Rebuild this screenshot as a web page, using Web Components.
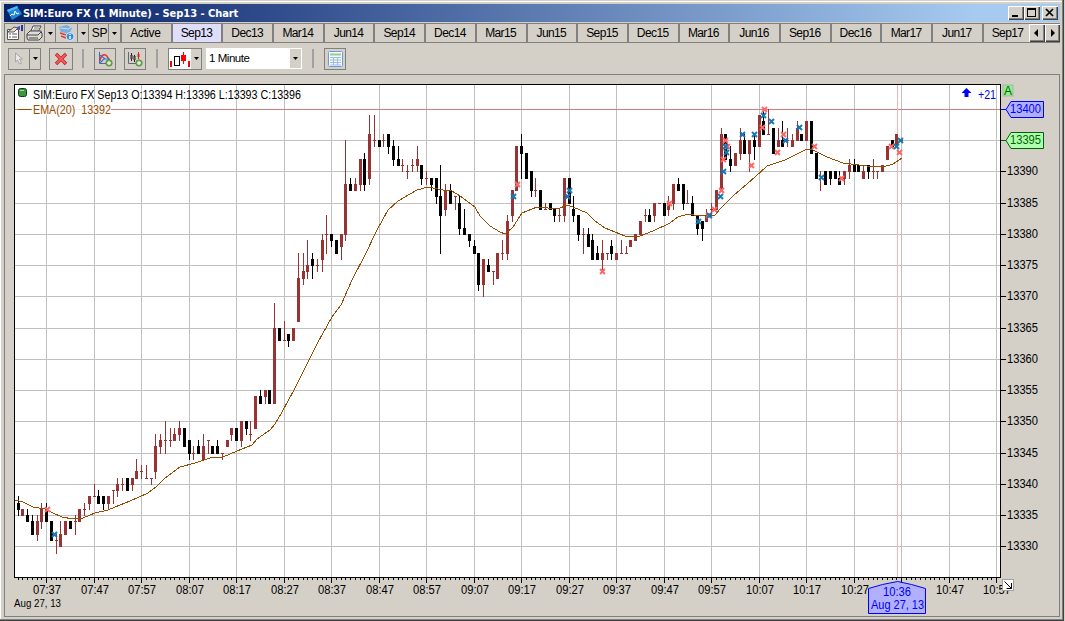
<!DOCTYPE html>
<html lang="en">
<head>
<meta charset="utf-8">
<title>SIM:Euro FX (1 Minute) - Sep13 - Chart</title>
<style>
    html, body { margin: 0; height: 100%; overflow: hidden; background: #d4d0c8; }
    body { font: 12px "Liberation Sans", Arial, sans-serif; color: #000; }
</style>
</head>
<body>
<chart-window></chart-window>

<script>
class ChartWindow extends HTMLElement {
    constructor() {
        super();
        this.attachShadow({mode : "open"});
    }

    static get styles() {
        return `
            :host {
                display: flex;
                flex-direction: column;
                box-sizing: border-box;
                width: 1065px;
                height: 621px;
                padding: 4px 5px 4px 4px;
                background: #d4d0c8;
                box-shadow: inset -1px 0 #d4d0c8, inset -2px -1px #404040, inset -3px -2px #808080, inset 0 1px #d4d0c8, inset 1px 2px #fff;
            }
            .panel {
                flex: 1;
                box-sizing: border-box;
                border: 1px solid #808080;
            }
        `;
    }

    connectedCallback() {
        this.shadowRoot.innerHTML = `
            <style>${ChartWindow.styles}</style>
            <title-bar>SIM:Euro FX (1 Minute) - Sep13 - Chart</title-bar>
            <contract-tabs></contract-tabs>
            <tool-bar></tool-bar>
            <section class="panel"><price-chart></price-chart></section>
        `;
    }
}

class TitleBar extends HTMLElement {
    constructor() {
        super();
        this.attachShadow({mode : "open"});
    }

    static get styles() {
        return `
            :host {
                display: flex;
                align-items: center;
                height: 18px;
                margin-bottom: 1px;
                padding: 0 2px 0 3px;
                background: linear-gradient(90deg, #0a246a 0%, #0a246a 4%, #a6caf0 92%);
                color: #fff;
            }
            .logo { flex: none; margin-right: 1px; }
            .title {
                flex: 1;
                font: bold 11px "DejaVu Sans Condensed", "DejaVu Sans", sans-serif;
                font-stretch: condensed;
                letter-spacing: -0.04px;
                white-space: pre;
            }
            .btn {
                box-sizing: border-box;
                width: 16px;
                height: 14px;
                background: #d4d0c8;
                box-shadow: inset 1px 1px #fff, inset -1px -1px #404040, inset -2px -2px #808080;
            }
            .btn.close { margin-left: 2px; }
            svg { display: block; }
        `;
    }

    connectedCallback() {
        this.shadowRoot.innerHTML = `
            <style>${TitleBar.styles}</style>
            <svg class="logo" width="15" height="15" viewBox="0 0 15 15">
                <path d="M0 4 10 0 15 8 5 14Z" fill="#1d86d8"/>
                <path d="M0 4 10 0 11 2 1 6Z" fill="#59b8f4"/>
                <path d="M3 10 5 8 7 9 8 5 10 8 12 7" fill="none" stroke="#fff"/>
            </svg>
            <span class="title"><slot></slot></span>
            <div class="btn"><svg width="16" height="14"><path d="M4 10h6" stroke="#000" stroke-width="2"/></svg></div>
            <div class="btn"><svg width="16" height="14" shape-rendering="crispEdges"><path d="M3 2h9v2H3z"/><path d="M3.5 3v7.5h8V3" fill="none" stroke="#000"/></svg></div>
            <div class="btn close"><svg width="16" height="14"><path d="M4 3l7 7M11 3l-7 7" stroke="#000" stroke-width="1.7"/></svg></div>
        `;
    }
}

class ContractTabs extends HTMLElement {
    constructor() {
        super();
        this.attachShadow({mode : "open"});
        this.contracts = ["Active", "Sep13", "Dec13", "Mar14", "Jun14", "Sep14", "Dec14", "Mar15", "Jun15",
            "Sep15", "Dec15", "Mar16", "Jun16", "Sep16", "Dec16", "Mar17", "Jun17", "Sep17"];
        this.selected = "Sep13";
    }

    static get styles() {
        return `
            :host {
                display: flex;
                box-sizing: border-box;
                height: 20px;
                border-top: 1px solid #808080;
                border-bottom: 1px solid #808080;
                border-left: 1px solid #808080;
                overflow: hidden;
            }
            .cell {
                flex: none;
                box-sizing: border-box;
                display: flex;
                align-items: center;
                justify-content: center;
                border-right: 1px solid #808080;
                letter-spacing: -0.3px;
            }
            .cell.symbol { padding-left: 2px; }
            .tabs { flex: 1; display: flex; overflow: hidden; }
            .tab {
                flex: none;
                box-sizing: border-box;
                width: 50.7px;
                padding-right: 1px;
                border-left: 2px solid #808080;
                text-align: center;
                line-height: 18px;
                letter-spacing: -0.6px;
            }
            .tab:first-child { letter-spacing: -0.4px; padding-right: 2px; }
            .tab.on { background: #dedefa; }
            .scroll {
                flex: none;
                width: 15.5px;
                height: 18px;
                background: #d4d0c8;
                box-shadow: inset 1px 1px #fff, inset -1px -1px #404040, inset -2px -2px #808080;
            }
            svg { display: block; }
        `;
    }

    connectedCallback() {
        const drop = `<svg width="5" height="3"><path d="M0 0h5L2.5 3z"/></svg>`;
        const tabs = this.contracts.map(c => `<div class="tab${c === this.selected ? " on" : ""}">${c}</div>`).join("");
        this.shadowRoot.innerHTML = `
            <style>${ContractTabs.styles}</style>
            <div class="cell" style="width:20px">
                <svg width="17" height="16" viewBox="0 0 17 16">
                    <path d="M1.5 4.5h11v10h-11z" fill="#fff" stroke="#555"/>
                    <path d="M3 9h2M6 9h5M3 12h2M6 12h5" stroke="#555"/>
                    <path d="M2 7 8 2l4 1-4 4z" fill="#e8ddc8" stroke="#333" stroke-width=".8"/>
                    <path d="M11 2l3-1v4l-3-1z" fill="#4c50b8"/><path d="M15 0h2v6h-2z" fill="#30309a"/>
                </svg>
            </div>
            <div class="cell" style="width:20px">
                <svg width="17" height="16" viewBox="0 0 17 16">
                    <path d="M5 6 7 1h8l-3 6z" fill="#fff" stroke="#444"/><path d="M8 3h5M7 5h5" stroke="#777"/>
                    <path d="M1 9 4 6h11l1 3v3l-3 3H2l-1-2z" fill="#ddd" stroke="#444"/>
                    <path d="M1 10h11l3-3M3 13h9" fill="none" stroke="#444"/><path d="M9 12h2" stroke="#cc0"/>
                </svg>
            </div>
            <div class="cell" style="width:11px">${drop}</div>
            <div class="cell" style="width:22px">
                <svg width="17" height="16" viewBox="0 0 17 16">
                    <path d="M1 2 9 0l5 3-3 7-8-2z" fill="#79aede"/><path d="M2 3l9 1 2-2" fill="none" stroke="#c5dff5"/>
                    <path d="M2 7l6 1v6l-5-2z" fill="#e8c8c0"/><path d="M2 8l6 2M3 11l5 2" stroke="#c84838" stroke-width="1.5"/>
                    <circle cx="12" cy="11.5" r="4" fill="#3a8ad8" stroke="#d8ecff"/><path d="M12 8.7v1.3M12 11v3" stroke="#fff" stroke-width="1.5"/>
                </svg>
            </div>
            <div class="cell" style="width:11px">${drop}</div>
            <div class="cell symbol" style="width:20px">SP</div>
            <div class="cell" style="width:11px;border:0">${drop}</div>
            <div class="tabs">${tabs}</div>
            <div class="scroll"><svg width="15" height="18"><path d="M9 5v8L5 9z"/></svg></div>
            <div class="scroll"><svg width="15" height="18"><path d="M6 5v8l4-4z"/></svg></div>
        `;
    }
}

class ToolBar extends HTMLElement {
    constructor() {
        super();
        this.attachShadow({mode : "open"});
    }

    static get styles() {
        return `
            :host {
                display: flex;
                align-items: center;
                height: 31px;
                padding-left: 4px;
            }
            .btn {
                box-sizing: border-box;
                flex: none;
                display: flex;
                height: 22px;
                border: 1px solid #808080;
                align-items: center;
                justify-content: center;
            }
            .part { display: flex; align-items: center; justify-content: center; height: 20px; }
            .part + .part { border-left: 1px solid #808080; }
            .sep { flex: none; width: 2px; height: 19px; background: #a0a0a0; }
            .combo {
                display: flex;
                box-sizing: border-box;
                width: 96px;
                height: 21px;
                border: 1px solid #fff;
                background: #fff;
                line-height: 19px;
                letter-spacing: -0.45px;
            }
            .combo span { flex: 1; padding-left: 2px; font-size: 11.5px; }
            .combo div { width: 11px; background: #d4d0c8; display: flex; align-items: center; justify-content: center; }
            svg { display: block; }
        `;
    }

    connectedCallback() {
        const drop = `<svg width="5" height="3"><path d="M0 0h5L2.5 3z"/></svg>`;
        const plus = `<circle cx="12" cy="12" r="3.2" fill="#7cb45c" stroke="#48883a" stroke-width=".8"/><path d="M12 10v4M10 12h4" stroke="#fff"/>`;
        this.shadowRoot.innerHTML = `
            <style>${ToolBar.styles}</style>
            <div class="btn" style="width:33px">
                <div class="part" style="width:20px"><svg width="10" height="13"><path d="M1.5 1v9l2-2 2 4 2-1-2-4h3z" fill="#e8e8e8" stroke="#999" stroke-width=".8"/></svg></div>
                <div class="part" style="flex:1">${drop}</div>
            </div>
            <div class="btn" style="width:24px;margin-left:8px">
                <svg width="14" height="14"><path d="M2 2l10 10M12 2l-10 10" stroke="#b32424" stroke-width="3.4"/><path d="M2.5 2.5l9 9M11.5 2.5l-9 9" stroke="#f45c5c" stroke-width="2"/></svg>
            </div>
            <div class="sep" style="margin-left:9px"></div>
            <div class="btn" style="width:22px;margin-left:10px">
                <svg width="16" height="16" viewBox="0 0 16 16"><path d="M2.5 1v11.5H11" fill="none" stroke="#4a68a8"/><path d="M3 10c1-7 6-9 9-1" fill="none" stroke="#e03838" stroke-width="1.6"/><path d="M3 4l5 4 5 0M3 12l5-5" fill="none" stroke="#3878d0" stroke-width="1.2"/>${plus}</svg>
            </div>
            <div class="btn" style="width:22px;margin-left:8px">
                <svg width="16" height="16" viewBox="0 0 16 16"><path d="M1.5 1v11.5H10" fill="none" stroke="#667"/><path d="M4.5 2v8M7.5 4v7" stroke="#222"/><path d="M4 4h1v4h-1zM7 5h1v4h-1z" fill="#fff" stroke="#222"/><path d="M11.5 1v7" stroke="#d22"/><path d="M10.500 3h2v3h-2z" fill="#d22"/>${plus}</svg>
            </div>
            <div class="sep" style="margin-left:10px"></div>
            <div class="btn" style="width:34px;margin-left:10px">
                <div class="part" style="width:22px;background:#fff">
                    <svg width="20" height="18" shape-rendering="crispEdges"><path d="M0 11h2v6H0zM11 5h5v6h-5zM13 2h1v12h-1zM18 11h2v6h-2z" fill="#f00"/><path d="M4.500 6.500h5v9h-5z" fill="#fff" stroke="#000"/></svg>
                </div>
                <div class="part" style="flex:1;border:0">${drop}</div>
            </div>
            <div class="combo" style="margin-left:4px"><span>1 Minute</span><div>${drop}</div></div>
            <div class="sep" style="margin-left:10px"></div>
            <div class="btn" style="width:22px;margin-left:10px">
                <svg width="15" height="16" viewBox="0 0 15 16"><rect x=".5" y=".5" width="14" height="15" rx="1" fill="#f4faff" stroke="#6f9cd0"/><path d="M2 3.500h11" stroke="#98cc88" stroke-width="2"/><path d="M2 6.500h11M2 9h11M2 11.500h11M2 14h11M5.500 6v8M9.500 6v8" stroke="#98bce4"/></svg>
            </div>
        `;
    }
}

// One bar per minute from 07:31: open high low close, less 13000
const BARS = `337 338 335 336,335 336 335 336,335 336 334 334,334 335 332 332,332 335 331 334,334 337 333 336,
336 337 334 334,334 334 331 331,331 332 329 331,330 334 330 332,332 334 332 334,334 334 333 333,334 335 332 334,
334 336 334 336,336 337 335 336,337 338 336 338,338 340 338 338,338 339 337 337,338 338 336 337,337 338 336 338,
339 339 337 339,339 341 338 340,340 341 339 340,341 341 339 339,340 341 339 341,341 344 341 342,342 343 341 342,
341 343 341 341,341 341 340 341,342 348 341 346,346 348 345 347,347 350 345 347,347 349 346 347,347 349 347 348,
348 350 347 349,349 349 346 346,347 347 344 345,345 346 344 345,346 347 345 345,344 348 344 346,347 347 345 347,
346 346 345 345,346 347 345 345,345 345 344 345,346 347 346 347,348 349 347 349,349 349 347 347,347 350 346 350,
350 350 348 349,348 350 347 348,349 354 349 354,354 355 353 353,354 355 353 355,355 355 353 353,353 369 353 365,
365 365 363 363,363 366 363 363,364 364 362 363,363 365 363 365,366 377 366 373,373 377 372 374,374 379 373 375,
376 377 373 375,375 376 374 375,376 380 374 379,380 383 377 380,380 380 378 379,379 379 377 377,378 380 376 380,
380 395 379 388,388 389 387 387,387 389 387 388,388 392 387 392,392 393 387 388,389 399 388 396,395 399 394 395,
395 395 394 394,395 396 394 395,396 396 393 394,394 395 391 392,392 394 391 391,391 392 390 391,390 391 389 390,
391 392 390 391,391 394 390 392,391 391 388 389,389 390 388 389,389 389 387 388,389 389 385 386,386 391 377 383,
384 388 383 387,387 388 385 385,386 386 384 386,385 386 380 381,381 384 380 380,380 380 378 379,378 379 377 377,
377 377 371 372,372 376 370 376,375 376 374 374,374 374 372 374,373 377 373 377,377 379 376 377,377 383 376 382,
383 387 382 387,387 394 387 394,394 396 389 393,393 393 389 389,390 390 386 387,387 389 386 387,387 387 384 384,
384 385 384 384,385 385 384 384,384 384 382 383,383 384 382 383,383 389 382 389,389 389 385 385,384 386 382 383,
383 383 379 380,380 381 377 380,380 381 378 378,379 380 376 376,377 378 376 376,376 379 374 377,377 377 376 377,
378 379 376 377,376 377 376 377,377 379 377 377,377 378 377 377,378 379 378 379,379 380 379 380,380 382 380 382,
383 384 382 383,383 384 382 382,383 385 382 385,385 385 385 385,385 385 383 383,384 386 383 385,385 388 384 388,
388 389 387 387,388 388 384 385,385 387 385 385,385 386 383 383,383 383 380 381,382 382 379 381,382 384 382 383,
384 385 383 384,384 387 384 387,387 397 387 396,396 396 392 392,392 394 390 391,391 393 391 393,393 397 392 395,
395 396 393 393,393 395 390 395,395 396 392 394,394 399 394 399,398 400 396 396,396 400 396 396,397 397 393 393,
394 397 394 395,395 398 394 394,395 397 394 395,394 396 394 395,395 398 395 397,396 396 395 395,395 398 395 398,
398 398 393 393,393 393 389 389,389 390 387 389,390 390 388 388,390 390 388 389,390 390 389 389,389 390 388 388,
389 390 388 390,390 392 389 391,391 392 390 390,391 391 390 390,389 391 389 390,391 391 389 390,390 392 389 390,
390 390 389 390,390 391 390 391,392 394 392 394,395 395 394 394,394 396 394 396,395 395 395 395`;

const EMA = "15,500 23,502 33,507 45,509 53,513 62,517 73,519 83,518 95,513 108,510 120,505 130,501 148,493 157,486 164,479 " +
    "180,467 195,463 210,458 223,457 237,451 252,445 257,439 270,430 275,424 282,412 294,390 308,362 318,342 332,317 341,305 " +
    "352,280 365,255 377,230 388,210 398,201 417,190 428,187 443,190 452,191 460,196 475,207 480,216 490,226 500,232 505,234 " +
    "513,227 522,213 537,207 558,209 567,205 573,207 587,213 595,221 605,228 625,236 640,236 653,231 670,223 678,217 688,214 " +
    "700,216 715,215 720,209 733,196 755,177 767,166 785,160 807,149 813,150 827,157 843,163 867,166 883,167 893,164 902,158";

const SELLS = [[47,509],[517,184],[602,271],[669,203],[725,140],[727,146],[723,159],[721,190],[714,209],[708,215],
    [751,165],[764,109],[762,127],[777,152],[783,134],[814,146],[841,178],[891,146],[899,152]];
const BUYS = [[54,534],[513,196],[567,196],[569,190],[698,221],[709,215],[720,196],[723,171],[726,152],[725,146],
    [742,134],[754,134],[763,115],[771,121],[785,140],[799,127],[821,177],[896,146],[900,140]];

class PriceChart extends HTMLElement {
    constructor() {
        super();
        this.attachShadow({mode : "open"});
    }

    static get styles() {
        return `
            :host { display: block; }
            svg { display: block; }
            text { font: 12px "Liberation Sans", Arial, sans-serif; white-space: pre; }
            .crisp { shape-rendering: crispEdges; }
        `;
    }

    // pixel column of a minute, counted from 07:37
    x(minute) {
        return Math.floor(46.5 + minute * 4.75);
    }

    y(price) {
        return Math.round(109 + (400 - price) * 6.25 - 0.1);
    }

    label(x, y, width, text, extra = "") {
        return `<text x="${x}" y="${y}" textLength="${width}" lengthAdjust="spacingAndGlyphs" ${extra}>${text}</text>`;
    }

    grid() {
        let out = "";
        for (let p = 395; p >= 330; p -= 5) {
            out += `<rect x="15" y="${this.y(p)}" width="985" height="1" fill="#c0c0c0"/>`;
        }
        for (let m = 0; m <= 200; m += 10) {
            out += `<rect x="${this.x(m)}" y="85" width="1" height="492" fill="#c0c0c0"/>`;
        }
        return out + `<rect x="15" y="109" width="985" height="1" fill="#cc8080"/><rect x="897" y="85" width="1" height="492" fill="#ffb0b0"/>`;
    }

    bars() {
        return BARS.split(",").map((bar, i) => {
            const [o, h, l, c] = bar.trim().split(" ").map(Number);
            const x = this.x(i - 6);
            const top = this.y(Math.max(o, c));
            const bottom = this.y(Math.min(o, c));
            return `<g fill="${o > c ? "#000" : "#993333"}">
                <rect x="${x}" y="${this.y(h)}" width="1" height="${this.y(l) - this.y(h) + 1}"/>
                <rect x="${x - 1}" y="${top}" width="3" height="${bottom - top + 1}"/>
            </g>`;
        }).join("");
    }

    marks(points, color) {
        const d = points.map(([x, y]) => `M${x - 2} ${y - 2}l5 5m0 -5l-5 5`).join("");
        return `<path d="${d}" fill="none" stroke="${color}" stroke-width="1.9"/>`;
    }

    axes() {
        let out = `<g class="crisp"><path d="M14.500 577.500V84.500H1000.500V577.500Z" fill="none" stroke="#000"/>`;
        for (let m = -6; m <= 200; m++) {
            out += `<rect x="${this.x(m)}" y="578" width="1" height="${m % 10 === 0 ? 5 : 2}"/>`;
        }
        for (let p = 390; p >= 330; p -= 5) {
            out += `<rect x="1001" y="${this.y(p)}" width="5" height="1"/>`;
        }
        out += "</g>";
        for (let p = 390; p >= 330; p -= 5) {
            out += this.label(1007, this.y(p) + 4, 31, "13" + p);
        }
        for (let m = 0; m <= 200; m += 10) {
            const t = 7 * 60 + 37 + m;
            // the cursor flag stands in for this one
            if (m === 180) continue;
            const text = String(Math.floor(t / 60)).padStart(2, "0") + ":" + String(t % 60).padStart(2, "0");
            out += this.label(this.x(m) - 13, 594, 28, text);
        }
        return out + this.label(14, 607, 47, "Aug 27, 13", `style="font-size:11px"`);
    }

    flag(y, text, line, fill) {
        return `<path d="M1001 ${y}.500h5l5 -8h32.500v16h-32.500l-5 -8" fill="${fill}" stroke="${line}"/>` +
            this.label(1010, y + 4, 31, text, `fill="${line}"`);
    }

    connectedCallback() {
        this.shadowRoot.innerHTML = `
            <style>${PriceChart.styles}</style>
            <svg width="1054" height="540" viewBox="5 75 1054 540">
                <rect x="14" y="84" width="987" height="494" fill="#fff"/>
                <g class="crisp">${this.grid()}${this.bars()}</g>
                <polyline class="crisp" points="${EMA}" fill="none" stroke="#964b00"/>
                ${this.marks(SELLS, "#ff6666")}
                ${this.marks(BUYS, "#1478b4")}
                ${this.axes()}

                <rect x="32" y="104" width="79" height="11" fill="#fff" opacity=".85"/>
                <rect x="18.500" y="88.500" width="8" height="8" rx="2" fill="#3c963c" stroke="#123c12"/>
                <path d="M20 90.500h4" stroke="#a0dca0"/>
                ${this.label(33, 99, 268, "SIM:Euro FX Sep13 O:13394 H:13396 L:13393 C:13396")}
                <path class="crisp" d="M18 109.500h13" stroke="#964b00"/>
                ${this.label(33, 114, 78, "EMA(20)  13392", `fill="#964b00"`)}
                <path d="M966.500 88l5 5h-3v4h-4v-4h-3z" fill="#00f"/>
                ${this.label(978, 99, 18, "+21", `fill="#00f"`)}

                <rect x="1003" y="85" width="10" height="11" fill="#90ee90" stroke="#a8b8a0"/>
                ${this.label(1004, 95, 8, "A", `fill="#006400"`)}
                ${this.flag(109, "13400", "#0000ff", "#b0b0ff")}
                ${this.flag(140, "13395", "#006400", "#b0ffb0")}

                <rect x="1002.500" y="579.500" width="11" height="11" fill="#fff" stroke="#a0a0a0"/>
                <path d="M1004.500 581.500l7 7M1011.500 583v5.500h-5" fill="none" stroke="#000"/>
                <path d="M897.500 581.500l14 3 14 4v25h-57v-25l14 -4z" fill="#b0b0ff" stroke="#00f"/>
                ${this.label(883, 596, 28, "10:36", `fill="#00f"`)}
                ${this.label(871, 609, 53, "Aug 27, 13", `fill="#00f"`)}
            </svg>
        `;
    }
}

customElements.define("title-bar", TitleBar);
customElements.define("contract-tabs", ContractTabs);
customElements.define("tool-bar", ToolBar);
customElements.define("price-chart", PriceChart);
customElements.define("chart-window", ChartWindow);
</script>
</body>
</html>
